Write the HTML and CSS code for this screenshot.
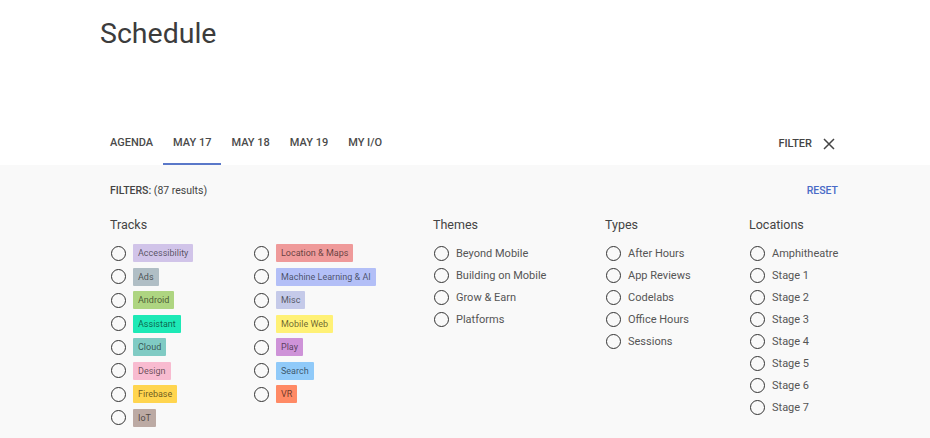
FILE: index.html
```html
<!DOCTYPE html>
<html lang="en">
<head>
  <meta charset="UTF-8" />
  <title>Schedule</title>
  <link rel="stylesheet" href="styles.css">
</head>
<body>
  <header class="topo">
    <div class="wrap">
      <h1>Schedule</h1>
      <nav class="abas">
        <a class="aba">AGENDA</a>
        <a class="aba ativa">MAY 17</a>
        <a class="aba">MAY 18</a>
        <a class="aba">MAY 19</a>
        <a class="aba">MY I/O</a>
        <div class="filtro-toggle">
          <span>FILTER</span>
          <svg class="fechar" viewBox="0 0 12 12" width="12" height="12">
            <path d="M1 1 L11 11 M11 1 L1 11" stroke="#444" stroke-width="1.5" fill="none" />
          </svg>
        </div>
      </nav>
    </div>
  </header>

  <section class="filtros">
    <div class="wrap">
      <div class="filtros-topo">
        <div class="resultado"><b>FILTERS:</b> (87 results)</div>
        <a class="reset">RESET</a>
      </div>

      <div class="colunas">
        <div class="grupo">
          <h2>Tracks</h2>
          <div class="tracks">
            <ul class="lista trilhas">
              <li><span class="radio"></span><span class="chip c-access">Accessibility</span></li>
              <li><span class="radio"></span><span class="chip c-ads">Ads</span></li>
              <li><span class="radio"></span><span class="chip c-android">Android</span></li>
              <li><span class="radio"></span><span class="chip c-assistant">Assistant</span></li>
              <li><span class="radio"></span><span class="chip c-cloud">Cloud</span></li>
              <li><span class="radio"></span><span class="chip c-design">Design</span></li>
              <li><span class="radio"></span><span class="chip c-firebase">Firebase</span></li>
              <li><span class="radio"></span><span class="chip c-iot">IoT</span></li>
            </ul>
            <ul class="lista trilhas">
              <li><span class="radio"></span><span class="chip c-maps">Location &amp; Maps</span></li>
              <li><span class="radio"></span><span class="chip c-ml">Machine Learning &amp; AI</span></li>
              <li><span class="radio"></span><span class="chip c-misc">Misc</span></li>
              <li><span class="radio"></span><span class="chip c-web">Mobile Web</span></li>
              <li><span class="radio"></span><span class="chip c-play">Play</span></li>
              <li><span class="radio"></span><span class="chip c-search">Search</span></li>
              <li><span class="radio"></span><span class="chip c-vr">VR</span></li>
            </ul>
          </div>
        </div>

        <div class="grupo">
          <h2>Themes</h2>
          <ul class="lista">
            <li><span class="radio"></span>Beyond Mobile</li>
            <li><span class="radio"></span>Building on Mobile</li>
            <li><span class="radio"></span>Grow &amp; Earn</li>
            <li><span class="radio"></span>Platforms</li>
          </ul>
        </div>

        <div class="grupo">
          <h2>Types</h2>
          <ul class="lista">
            <li><span class="radio"></span>After Hours</li>
            <li><span class="radio"></span>App Reviews</li>
            <li><span class="radio"></span>Codelabs</li>
            <li><span class="radio"></span>Office Hours</li>
            <li><span class="radio"></span>Sessions</li>
          </ul>
        </div>

        <div class="grupo">
          <h2>Locations</h2>
          <ul class="lista">
            <li><span class="radio"></span>Amphitheatre</li>
            <li><span class="radio"></span>Stage 1</li>
            <li><span class="radio"></span>Stage 2</li>
            <li><span class="radio"></span>Stage 3</li>
            <li><span class="radio"></span>Stage 4</li>
            <li><span class="radio"></span>Stage 5</li>
            <li><span class="radio"></span>Stage 6</li>
            <li><span class="radio"></span>Stage 7</li>
          </ul>
        </div>
      </div>
    </div>
  </section>
</body>
</html>
```

FILE: styles.css
```css
body {
  margin: 0;
  font-family: Roboto, 'Liberation Sans', sans-serif;
  color: #444;
  background: #f9f9f9;
}

.wrap {
  width: 740px;
  margin-left: 100px;
}

.topo {
  background: #fff;
}

h1 {
  margin: 0;
  padding-top: 17px;
  font-size: 28.5px;
  line-height: 34px;
  font-weight: 400;
  color: #3c3c3c;
}

.abas {
  display: flex;
  align-items: stretch;
  margin-top: 68px;
  height: 46px;
}

.aba {
  display: flex;
  align-items: center;
  padding: 2px 10px 0;
  font-size: 11px;
  font-weight: 500;
  color: #4a4a4a;
  border-bottom: 2px solid transparent;
  cursor: pointer;
}

.aba.ativa {
  border-bottom-color: #5a78c9;
}

.filtro-toggle {
  margin-left: auto;
  display: flex;
  align-items: center;
  gap: 11px;
  padding-right: 5px;
  padding-top: 3px;
  font-size: 11px;
  font-weight: 500;
}

/* area cinza dos filtros */
.filtros {
  min-height: 273px;
}

.filtros-topo {
  display: flex;
  justify-content: space-between;
  padding: 19px 2px 0 10px;
  font-size: 10.5px;
  line-height: 13px;
}

.resultado b {
  font-weight: 500;
}

.reset {
  color: #4a6bc7;
  font-weight: 500;
  cursor: pointer;
}

.colunas {
  display: grid;
  grid-template-columns: 323px 172px 144px 1fr;
  padding-left: 10px;
  margin-top: 19.5px;
}

h2 {
  margin: 0 0 10px;
  font-size: 12.5px;
  line-height: 15px;
  font-weight: 400;
  color: #444;
}

.tracks {
  display: flex;
}

.tracks .lista {
  width: 143px;
}

.lista {
  list-style: none;
  margin: 0;
  padding: 1px 0 0;
}

.tracks .lista {
  padding-top: 0;
}

.lista li {
  display: flex;
  align-items: center;
  gap: 7px;
  height: 22px;
  font-size: 11px;
  color: #555;
}

.trilhas li {
  height: 23.5px;
}

.radio {
  width: 15px;
  height: 15px;
  box-sizing: border-box;
  border: 1.8px solid #333;
  border-radius: 50%;
  margin-left: 1px;
}

.chip {
  display: inline-block;
  height: 18px;
  line-height: 18px;
  padding: 0 5px;
  font-size: 9px;
  color: rgba(0, 0, 0, 0.6);
  border-radius: 1px;
}

.c-access { background: #d1c4e9; }
.c-ads { background: #b0bec5; }
.c-android { background: #aed581; }
.c-assistant { background: #1de9b6; }
.c-cloud { background: #80cbc4; }
.c-design { background: #f8bbd0; }
.c-firebase { background: #ffd54f; }
.c-iot { background: #bcaaa4; }
.c-maps { background: #ef9a9a; }
.c-ml { background: #b3bff7; }
.c-misc { background: #c5cae9; }
.c-web { background: #fff176; }
.c-play { background: #ce93d8; }
.c-search { background: #90caf9; }
.c-vr { background: #ff8a65; }
```
